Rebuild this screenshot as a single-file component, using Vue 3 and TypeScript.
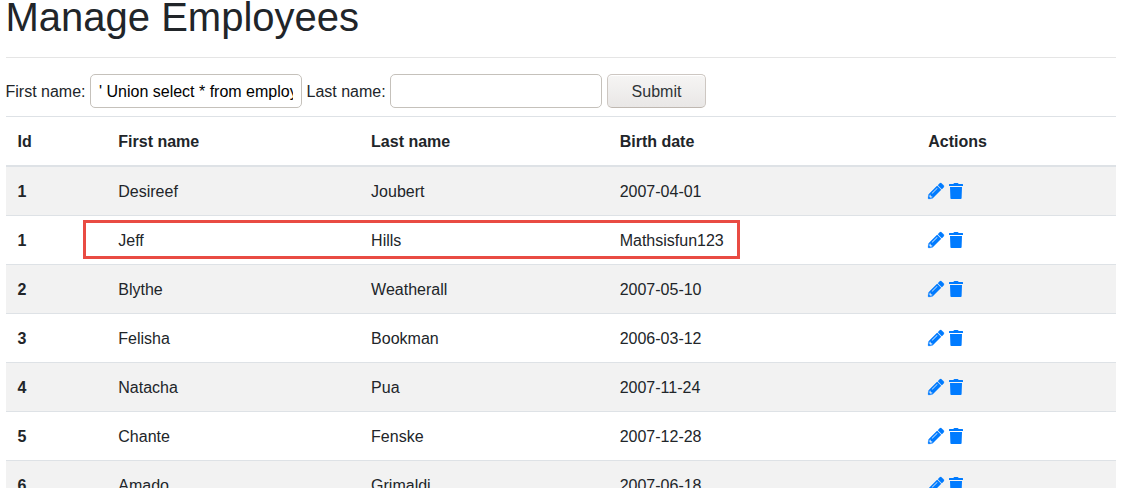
<script setup lang="ts">
import { ref } from 'vue'

interface Employee {
  id: number
  first: string
  last: string
  birth: string
  marked?: boolean
}

const firstName = ref("' Union select * from employees")
const lastName = ref('')

const employees: Employee[] = [
  { id: 1, first: 'Desireef', last: 'Joubert', birth: '2007-04-01' },
  { id: 1, first: 'Jeff', last: 'Hills', birth: 'Mathsisfun123', marked: true },
  { id: 2, first: 'Blythe', last: 'Weatherall', birth: '2007-05-10' },
  { id: 3, first: 'Felisha', last: 'Bookman', birth: '2006-03-12' },
  { id: 4, first: 'Natacha', last: 'Pua', birth: '2007-11-24' },
  { id: 5, first: 'Chante', last: 'Fenske', birth: '2007-12-28' },
  { id: 6, first: 'Amado', last: 'Grimaldi', birth: '2007-06-18' },
]
</script>

<template>
  <main class="page">
    <h1 class="title">Manage Employees</h1>
    <form class="search" @submit.prevent>
      <label class="lbl-first" for="first">First name:</label>
      <input id="first" v-model="firstName" type="text" spellcheck="false" />
      <label class="lbl-last" for="last">Last name:</label>
      <input id="last" v-model="lastName" type="text" />
      <button type="submit">Submit</button>
    </form>
    <div class="table">
      <div class="row head">
        <span>Id</span><span>First name</span><span>Last name</span><span>Birth date</span><span>Actions</span>
      </div>
      <div v-for="(e, i) in employees" :key="i" class="row">
        <b>{{ e.id }}</b>
        <span>{{ e.first }}</span>
        <span>{{ e.last }}</span>
        <span>{{ e.birth }}</span>
        <div class="actions">
          <svg class="pencil" width="16" height="16" viewBox="0 0 512 512"><path d="M497.9 142.1l-46.1 46.1c-4.7 4.7-12.3 4.7-17 0l-111-111c-4.7-4.7-4.7-12.3 0-17l46.1-46.1c18.7-18.7 49.1-18.7 67.9 0l60.1 60.1c18.8 18.7 18.8 49.1 0 67.9zM284.2 99.8L21.6 362.4.4 483.9c-2.9 16.4 11.4 30.6 27.8 27.8l121.5-21.3 262.6-262.6c4.7-4.7 4.7-12.3 0-17l-111-111c-4.8-4.7-12.4-4.7-17.1 0zM124.1 339.9c-5.5-5.5-5.5-14.3 0-19.8l154-154c5.5-5.5 14.3-5.5 19.8 0s5.5 14.3 0 19.8l-154 154c-5.5 5.5-14.3 5.5-19.8 0zM88 424h48v36.3l-64.5 11.3-31.1-31.1L51.7 376H88v48z" /></svg>
          <svg width="14" height="16" viewBox="0 0 14 16"><path d="M4.2 1 4.7.4Q4.9 0 5.4 0h3.2q.5 0 .7.4L9.8 1h3.7q.5 0 .5.5V3H0V1.500Q0 1 .5 1zM1 4h12l-.4 11.200q-.1.8-.9.8H2.300q-.8 0-.9-.8z" /></svg>
        </div>
        <i v-if="e.marked" class="marker"></i>
      </div>
    </div>
  </main>
</template>

<style>
body {
  margin: 0;
  background: #fff;
}
</style>

<style scoped>
.page {
  box-sizing: border-box;
  height: 488px;
  overflow: hidden;
  padding: 0 17px 0 6px;
  color: #212529;
  font: 16px/24px 'Liberation Sans', Arial, sans-serif;
}
.title {
  margin: -7px 0 0 -0.5px;
  height: 64px;
  font-size: 40px;
  font-weight: 400;
  line-height: 48px;
}
.search {
  display: flex;
  align-items: flex-start;
  height: 42px;
  padding-top: 16px;
  border-top: 1px solid #e5e5e5;
}
.search label {
  flex: none;
  line-height: 36px;
  white-space: nowrap;
}
.lbl-first {
  width: 84.5px;
  margin-left: -0.5px;
}
.lbl-last {
  width: 83.5px;
  margin-left: 4.5px;
}
.search input {
  box-sizing: border-box;
  flex: none;
  width: 212px;
  height: 34px;
  margin: 0;
  padding: 2px 8px 0;
  border: 1px solid #c5c1bb;
  border-radius: 5px;
  outline: 0;
  background: #fff;
  color: #000;
  font: inherit;
}
.search button {
  box-sizing: border-box;
  width: 99px;
  height: 34px;
  margin: 0 0 0 5px;
  padding: 2px 0 0;
  border: 1px solid #cdc7c2;
  border-bottom-color: #bfb8b1;
  border-radius: 5px;
  background: linear-gradient(#f6f5f4, #e9e7e6);
  box-shadow: inset 0 1px #fff;
  color: #2e3436;
  font: inherit;
}
.table {
  border-top: 1px solid #dee2e6;
}
.row {
  position: relative;
  display: grid;
  grid-template-columns: 100.7px 252.8px 248.600px 308.6px 1fr;
  align-items: center;
  box-sizing: border-box;
  height: 49px;
  padding-left: 11.6px;
  border-top: 1px solid #dee2e6;
}
.row > span,
.row > b {
  padding-top: 2px;
}
.head {
  height: 50px;
  border-top: 0;
  border-bottom: 2px solid #dee2e6;
  font-weight: 700;
}
.head + .row {
  height: 48px;
  border-top: 0;
}
.row:nth-child(even) {
  background: #f2f2f2;
}
.actions {
  display: flex;
  gap: 4.5px;
}
.actions svg {
  fill: #007bff;
}
.actions .pencil {
  overflow: visible;
  stroke: #007bff;
  stroke-width: 8;
}
.marker {
  position: absolute;
  left: 77px;
  top: 4px;
  box-sizing: border-box;
  width: 657px;
  height: 39px;
  border: 3px solid #e94b43;
}
</style>
